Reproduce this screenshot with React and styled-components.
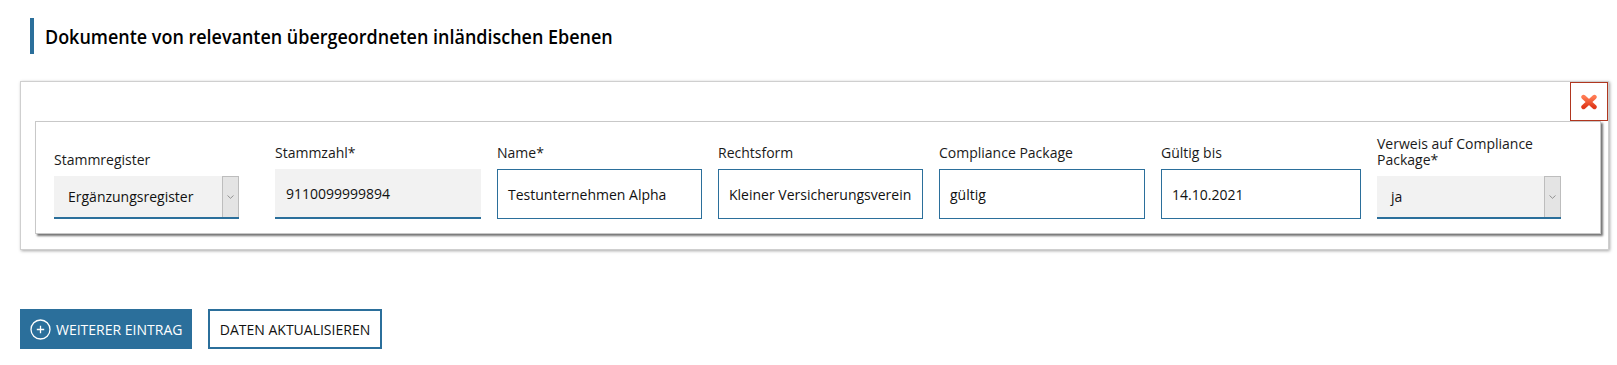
import React from "react";
import styled, { createGlobalStyle } from "styled-components";

const BLUE = "#2b6f9b";

const Global = createGlobalStyle`
  html, body { margin: 0; padding: 0; background: #fff; }
  body { font-family: "Open Sans", "Noto Sans", "DejaVu Sans", sans-serif; color: #111; }
  * { box-sizing: border-box; }
`;

const Page = styled.div`
  padding: 18px 8px 16px 20px;
  width: 1617px;
`;

const Heading = styled.h2`
  margin: 0 0 0 10px;
  height: 36px;
  border-left: 4px solid ${BLUE};
  padding-left: 11px;
  display: flex;
  align-items: center;
  font-size: 20px;
  font-weight: 600;
  color: #000;
`;

const HeadingText = styled.span`
  display: inline-block;
  white-space: nowrap;
  transform: scaleX(0.898);
  transform-origin: left center;
`;

const Panel = styled.section`
  margin-top: 27px;
  width: 1589px;
  border: 1px solid #cfcfcf;
  box-shadow: 1px 1px 3px rgba(0, 0, 0, 0.35);
  padding: 0 0 15px 0;
  display: flex;
  flex-direction: column;
`;

const CloseRow = styled.div`
  display: flex;
  justify-content: flex-end;
`;

const CloseButton = styled.button`
  width: 38px;
  height: 39px;
  border: 1px solid #b0361f;
  background: #fff;
  padding: 0;
  display: flex;
  align-items: center;
  justify-content: center;
  cursor: pointer;
`;

const Card = styled.div`
  margin: 0 7px 0 14px;
  border: 1px solid #c8c8c8;
  box-shadow: 2px 2px 2px rgba(0, 0, 0, 0.55);
  padding: 14px 18px 14px 18px;
`;

const Fields = styled.div`
  display: grid;
  grid-template-columns: 205px 206px 205px 205px 206px 200px 184px;
  column-gap: 16px;
  align-items: end;
`;

const Field = styled.div`
  display: flex;
  flex-direction: column;
`;

const Label = styled.label`
  font-size: 14px;
  line-height: ${(p) => (p.$multi ? 16 : 14)}px;
  margin-bottom: ${(p) => (p.$multi ? 8 : 9)}px;
  color: #1a1a1a;
`;

const TextInput = styled.div`
  height: 50px;
  display: flex;
  align-items: center;
  font-size: 14px;
  color: #111;
  padding: 0 10px;
  white-space: nowrap;
  overflow: hidden;
  ${(p) =>
    p.$readonly
      ? `background: #f2f2f2; border-bottom: 2px solid ${BLUE}; padding-left: 11px;`
      : `background: #fff; border: 1px solid ${BLUE};`}
`;

const SelectBox = styled.div`
  width: ${(p) => p.$w}px;
  height: 43px;
  display: flex;
  background: #f2f2f2;
  border-bottom: 2px solid ${BLUE};
`;

const SelectValue = styled.div`
  flex: 1;
  display: flex;
  align-items: center;
  padding-left: 14px;
  font-size: 14px;
  color: #111;
`;

const SelectArrow = styled.div`
  width: 17px;
  background: #e4e4e4;
  border: 1px solid #bdbdbd;
  border-bottom: none;
  display: flex;
  align-items: center;
  justify-content: center;
`;

const Actions = styled.div`
  margin-top: 59px;
  display: flex;
  gap: 16px;
`;

const PrimaryButton = styled.button`
  height: 40px;
  width: 172px;
  background: ${BLUE};
  color: #fff;
  border: none;
  padding: 0 0 0 10px;
  display: flex;
  align-items: center;
  gap: 5px;
  font-family: inherit;
  font-size: 14px;
  white-space: nowrap;
  text-transform: uppercase;
  cursor: pointer;
`;

const SecondaryButton = styled.button`
  height: 40px;
  width: 174px;
  background: #fff;
  color: #111;
  border: 2px solid ${BLUE};
  padding: 0;
  display: flex;
  align-items: center;
  justify-content: center;
  font-family: inherit;
  font-size: 14px;
  white-space: nowrap;
  text-transform: uppercase;
  cursor: pointer;
`;

const Chevron = () => (
  <svg width="7" height="4" viewBox="0 0 7 4">
    <path d="M0.5 0.5 L3.5 3.3 L6.5 0.5" fill="none" stroke="#8a8a8a" strokeWidth="0.9" />
  </svg>
);

const RedX = () => (
  <svg width="18" height="16" viewBox="0 0 18 16">
    <defs>
      <linearGradient id="xg" x1="0" y1="0" x2="0" y2="1">
        <stop offset="0" stopColor="#ff7a52" />
        <stop offset="1" stopColor="#e0381a" />
      </linearGradient>
    </defs>
    <g stroke="url(#xg)" strokeWidth="4.4" strokeLinecap="round">
      <line x1="3.5" y1="3" x2="14.5" y2="13" />
      <line x1="14.5" y1="3" x2="3.5" y2="13" />
    </g>
  </svg>
);

const PlusCircle = () => (
  <svg width="21" height="21" viewBox="0 0 21 21">
    <circle cx="10.5" cy="10.5" r="9.5" fill="none" stroke="#fff" strokeWidth="1.3" />
    <path d="M10.5 6.8 V14.2 M6.8 10.5 H14.2" stroke="#fff" strokeWidth="1.3" />
  </svg>
);

const Select = ({ value, width }) => (
  <SelectBox $w={width}>
    <SelectValue>{value}</SelectValue>
    <SelectArrow>
      <Chevron />
    </SelectArrow>
  </SelectBox>
);

export default function App() {
  return (
    <>
      <Global />
      <Page>
        <Heading>
          <HeadingText>Dokumente von relevanten übergeordneten inländischen Ebenen</HeadingText>
        </Heading>
        <Panel>
          <CloseRow>
            <CloseButton aria-label="Entfernen">
              <RedX />
            </CloseButton>
          </CloseRow>
          <Card>
            <Fields>
              <Field>
                <Label>Stammregister</Label>
                <Select value="Ergänzungsregister" width={185} />
              </Field>
              <Field>
                <Label>Stammzahl*</Label>
                <TextInput $readonly>9110099999894</TextInput>
              </Field>
              <Field>
                <Label>Name*</Label>
                <TextInput>Testunternehmen Alpha</TextInput>
              </Field>
              <Field>
                <Label>Rechtsform</Label>
                <TextInput>Kleiner Versicherungsverein</TextInput>
              </Field>
              <Field>
                <Label>Compliance Package</Label>
                <TextInput>gültig</TextInput>
              </Field>
              <Field>
                <Label>Gültig bis</Label>
                <TextInput>14.10.2021</TextInput>
              </Field>
              <Field>
                <Label $multi>
                  Verweis auf Compliance
                  <br />
                  Package*
                </Label>
                <Select value="ja" width={184} />
              </Field>
            </Fields>
          </Card>
        </Panel>
        <Actions>
          <PrimaryButton>
            <PlusCircle />
            Weiterer Eintrag
          </PrimaryButton>
          <SecondaryButton>Daten aktualisieren</SecondaryButton>
        </Actions>
      </Page>
    </>
  );
}
